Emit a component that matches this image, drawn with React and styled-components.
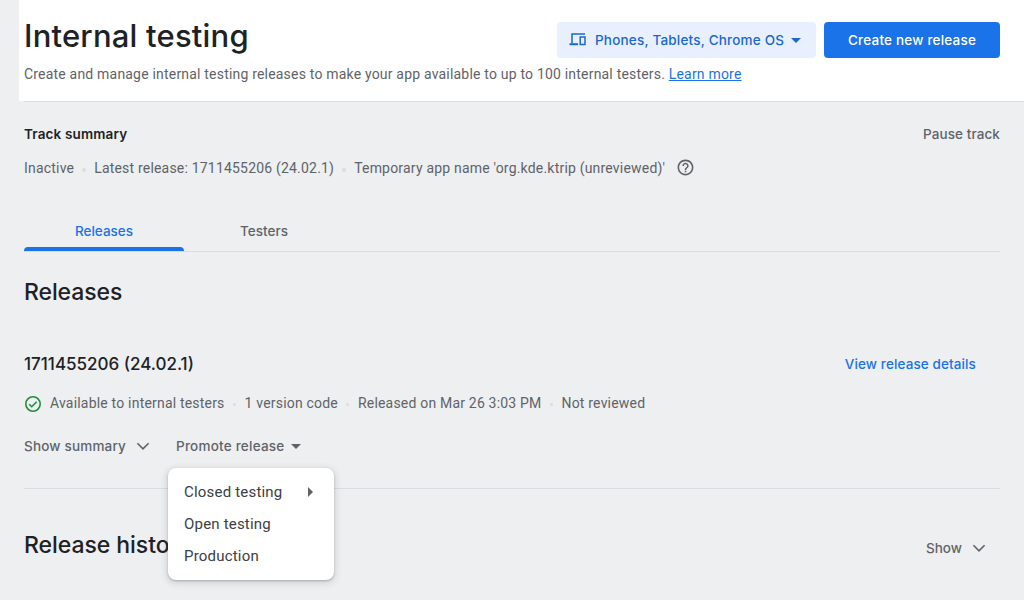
import React from "react";
import styled, { createGlobalStyle } from "styled-components";
import { MdArrowDropDown, MdHelpOutline, MdArrowRight } from "react-icons/md";

const GlobalStyle = createGlobalStyle`
  * { box-sizing: border-box; }
  body {
    margin: 0;
    background: #eeeff1;
    color: #5f6368;
    font: 400 14px/20px Roboto, "Liberation Sans", sans-serif;
    letter-spacing: 0.195px;
    overflow: hidden;
  }
  h1, h2, h3, p { margin: 0; }
  button { border: 0; padding: 0; background: none; cursor: pointer; }
  svg { flex: none; }
`;

const display = `font-family: "Google Sans", Inter, Roboto, sans-serif; font-weight: 500; white-space: nowrap;`;

const Page = styled.div`
  height: 600px;
  overflow: hidden;
`;
const Header = styled.header`
  height: 101px;
  margin-left: 19px;
  padding: 16px 24px 0 5px;
  background: #fff;
`;
const HeaderRow = styled.div`
  display: flex;
  justify-content: space-between;
  height: 48px;
`;
const PageTitle = styled.h1`
  ${display}
  font-size: 31px;
  line-height: 40px;
  font-weight: 450;
  color: #202124;
  letter-spacing: 0.2px;
`;
const HeaderActions = styled.div`
  display: flex;
  gap: 8px;
  padding-top: 6px;
`;
const FilledButton = styled.button`
  ${display}
  display: flex;
  align-items: center;
  justify-content: ${(p) => (p.$tonal ? "flex-start" : "center")};
  width: ${(p) => p.$width};
  height: 36px;
  padding-left: ${(p) => (p.$tonal ? "12px" : "0")};
  border-radius: 4px;
  font-size: 13.5px;
  line-height: 20px;
  color: ${(p) => (p.$tonal ? "#1967d2" : "#fff")};
  background: ${(p) => (p.$tonal ? "#e8f0fe" : "#1a73e8")};
  letter-spacing: 0.2px;
`;
const FormFactor = styled.span`
  flex: none;
  width: 189px;
  margin-left: 7px;
  text-align: left;
`;
const Intro = styled.p`
  white-space: nowrap;
`;
const Link = styled.a`
  color: #1a73e8;
  text-decoration: underline;
`;
const Main = styled.main`
  margin-left: 24px;
  padding-right: 24px;
  border-top: 1px solid #dadce0;
`;
const SplitRow = styled.div`
  display: flex;
  align-items: center;
  justify-content: space-between;
  padding-right: ${(p) => p.$inset || 0};
  height: ${(p) => p.$height || "20px"};
  margin-top: ${(p) => p.$top || 0};
`;
const Heading = styled.h2`
  ${display}
  font-size: ${(p) => p.$size};
  line-height: ${(p) => p.$line || "20px"};
  font-weight: ${(p) => p.$weight || 500};
  letter-spacing: ${(p) => p.$track || "0"};
  color: #202124;
`;
const TextButton = styled.button`
  ${display}
  display: flex;
  align-items: center;
  height: 20px;
  margin-top: ${(p) => p.$drop || 0};
  font-size: 13.5px;
  line-height: 20px;
  color: ${(p) => (p.$primary ? "#1a73e8" : "#5f6368")};
  letter-spacing: ${(p) => p.$track || "0"};
`;
const MetaRow = styled.div`
  display: flex;
  align-items: center;
  height: 20px;
  margin-top: ${(p) => p.$top};
  white-space: nowrap;
`;
const Dot = styled.i`
  width: ${(p) => (p.$small ? "3px" : "4px")};
  height: ${(p) => (p.$small ? "3px" : "4px")};
  margin: ${(p) => (p.$small ? "2px 8.5px 0" : "4px 8px 0")};
  border-radius: 50%;
  background: #dadce0;
`;
const HelpIcon = styled(MdHelpOutline)`
  margin: -2px 0 0 10.5px;
`;
const StatusIcon = styled.svg`
  margin: 2px 8px 0 0;
`;
const Tabs = styled.div`
  display: flex;
  height: 40px;
  margin-top: 34px;
  border-bottom: 1px solid #dadce0;
`;
const Tab = styled.button`
  ${display}
  position: relative;
  width: 160px;
  height: 39px;
  padding-bottom: 2px;
  font-size: 13.5px;
  line-height: 20px;
  color: ${(p) => (p.$active ? "#1a73e8" : "#5f6368")};
  &::after {
    content: "";
    position: absolute;
    left: 0;
    right: 0;
    bottom: 0;
    height: ${(p) => (p.$active ? "4px" : "0")};
    border-radius: 4px 4px 0 0;
    background: #1a73e8;
  }
`;
const Section = styled.section`
  margin-top: 20px;
  border-bottom: 1px solid #dadce0;
  height: 217px;
`;
const Actions = styled.div`
  display: flex;
  margin-top: 23px;
`;
const SummarySlot = styled.div`
  width: 152px;
`;
const MenuAnchor = styled.div`
  position: relative;
`;
const Menu = styled.div`
  position: absolute;
  top: 32px;
  left: -8px;
  width: 166px;
  padding: 8px 0;
  border-radius: 8px;
  background: #fff;
  box-shadow: 0 1px 2px rgba(60, 64, 67, 0.3), 0 2px 6px 2px rgba(60, 64, 67, 0.15);
`;
const MenuItem = styled.div`
  display: flex;
  align-items: center;
  justify-content: space-between;
  height: 32px;
  padding: 0 12px 0 16px;
  font-size: 15px;
  color: #3c4043;
  svg { color: #5f6368; }
`;
const ChevronIcon = styled.svg`
  margin-left: 8px;
`;

const Chevron = () => (
  <ChevronIcon width="18" height="18" viewBox="0 0 18 18" fill="none" stroke="currentColor" strokeWidth="1.6">
    <path d="M3.4 6.2 9 11.8l5.6-5.6" />
  </ChevronIcon>
);

const CheckCircle = () => (
  <StatusIcon width="18" height="18" viewBox="0 0 18 18" fill="none" stroke="#1e8e3e" strokeWidth="1.6">
    <circle cx="9" cy="9" r="7.2" />
    <path d="m5.2 9.2 2.5 2.5 5-5" />
  </StatusIcon>
);

const DevicesIcon = () => (
  <svg width="19" height="18" viewBox="0 0 19 18" fill="none" stroke="currentColor" strokeWidth="1.5">
    <path d="M16 3H3v9.2" />
    <path d="M.5 13.2h8.6" strokeWidth="2" />
    <path d="M11.2 6H16v7.4h-4.8z" />
  </svg>
);

export default function App() {
  return (
    <Page>
      <GlobalStyle />
      <Header>
        <HeaderRow>
          <PageTitle>Internal testing</PageTitle>
          <HeaderActions>
            <FilledButton $tonal $width="259px">
              <DevicesIcon />
              <FormFactor>Phones, Tablets, Chrome OS</FormFactor>
              <MdArrowDropDown size={24} />
            </FilledButton>
            <FilledButton $width="176px">Create new release</FilledButton>
          </HeaderActions>
        </HeaderRow>
        <Intro>
          Create and manage internal testing releases to make your app available to up to 100 internal testers.{" "}
          <Link>Learn more</Link>
        </Intro>
      </Header>
      <Main>
        <SplitRow $top="22px">
          <Heading $size="13.5px" $weight={600} $track="0.15px">Track summary</Heading>
          <TextButton $track="0.1px">Pause track</TextButton>
        </SplitRow>
        <MetaRow $top="14px">
          <span>Inactive</span>
          <Dot />
          <span>Latest release: 1711455206 (24.02.1)</span>
          <Dot />
          <span>Temporary app name 'org.kde.ktrip (unreviewed)'</span>
          <HelpIcon size={19} />
        </MetaRow>
        <Tabs>
          <Tab $active>Releases</Tab>
          <Tab>Testers</Tab>
        </Tabs>
        <Section>
          <Heading $size="23px" $line="40px" $weight={450} $track="-0.1px">Releases</Heading>
          <SplitRow $top="42px" $inset="24px">
            <Heading as="h3" $size="17px">1711455206 (24.02.1)</Heading>
            <TextButton $primary $track="0.11px">View release details</TextButton>
          </SplitRow>
          <MetaRow $top="19px">
            <CheckCircle />
            <span>Available to internal testers</span>
            <Dot $small />
            <span>1 version code</span>
            <Dot $small />
            <span>Released on Mar 26 3:03 PM</span>
            <Dot $small />
            <span>Not reviewed</span>
          </MetaRow>
          <Actions>
            <SummarySlot>
              <TextButton $track="0.18px">Show summary<Chevron /></TextButton>
            </SummarySlot>
            <MenuAnchor>
              <TextButton $track="0.22px">Promote release<MdArrowDropDown size={24} /></TextButton>
              <Menu>
                <MenuItem>Closed testing<MdArrowRight size={24} /></MenuItem>
                <MenuItem>Open testing</MenuItem>
                <MenuItem>Production</MenuItem>
              </Menu>
            </MenuAnchor>
          </Actions>
        </Section>
        <SplitRow $top="36px" $height="40px" $inset="12px">
          <Heading $size="23px" $line="40px" $weight={450} $track="-0.05px">Release history</Heading>
          <TextButton $drop="6px">Show<Chevron /></TextButton>
        </SplitRow>
      </Main>
    </Page>
  );
}
